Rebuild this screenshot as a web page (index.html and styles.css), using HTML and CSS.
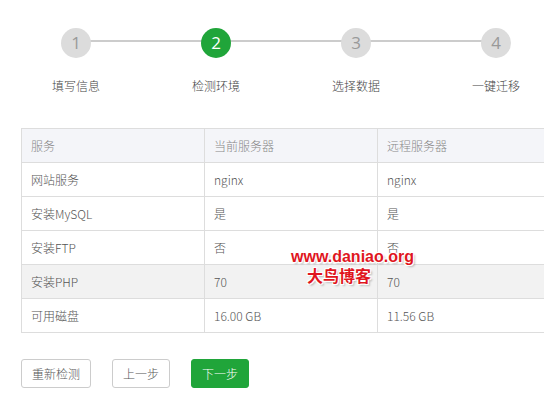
FILE: index.html
```html
<!DOCTYPE html>
<html lang="zh-CN">
<head>
<meta charset="utf-8">
<link rel="stylesheet" href="styles.css">
</head>
<body>
<div class="page">
  <div class="steps">
    <div class="step"><span class="dot">1</span><span class="label">填写信息</span></div>
    <div class="step active"><span class="dot">2</span><span class="label">检测环境</span></div>
    <div class="step"><span class="dot">3</span><span class="label">选择数据</span></div>
    <div class="step"><span class="dot">4</span><span class="label">一键迁移</span></div>
  </div>
  <div class="table-wrap">
    <table class="env">
      <thead>
        <tr><th class="c1">服务</th><th class="c2">当前服务器</th><th class="c3">远程服务器</th></tr>
      </thead>
      <tbody>
        <tr><td>网站服务</td><td>nginx</td><td>nginx</td></tr>
        <tr><td>安装MySQL</td><td>是</td><td>是</td></tr>
        <tr><td>安装FTP</td><td>否</td><td>否</td></tr>
        <tr class="hover"><td>安装PHP</td><td>70</td><td>70</td></tr>
        <tr><td>可用磁盘</td><td>16.00 GB</td><td>11.56 GB</td></tr>
      </tbody>
    </table>
    <div class="wm wm1">www.daniao.org</div>
    <div class="wm wm2">大鸟博客</div>
  </div>
  <div class="actions">
    <button class="btn">重新检测</button>
    <button class="btn">上一步</button>
    <button class="btn primary">下一步</button>
  </div>
</div>
</body>
</html>
```

FILE: styles.css
```css
* { box-sizing: border-box; }
html, body { margin: 0; padding: 0; background: #fff; }
body {
  width: 544px;
  height: 419px;
  overflow: hidden;
  font-family: "Noto Sans CJK SC", "Open Sans", sans-serif;
  font-size: 12px;
  color: #555;
}
.page { padding-top: 28px; }
.steps {
  position: relative;
  display: flex;
  margin-left: 6px;
}
.steps::before {
  content: "";
  position: absolute;
  left: 70px;
  width: 420px;
  top: 12px;
  height: 2px;
  background: #ccc;
}
.step {
  position: relative;
  flex: 0 0 140px;
  width: 140px;
  display: flex;
  flex-direction: column;
  align-items: center;
}
.dot {
  width: 30px;
  height: 30px;
  border-radius: 50%;
  background: #dcdcdc;
  color: #999;
  font-family: "Open Sans", sans-serif;
  font-size: 17px;
  line-height: 30px;
  text-align: center;
}
.step.active .dot { background: #20a53a; color: #fff; }
.label {
  margin-top: 19px;
  line-height: 18px;
  color: #444;
  font-size: 12px;
  font-weight: 300;
}
.table-wrap {
  position: relative;
  margin: 33px 0 0 21px;
  width: 560px;
}
.env {
  border-collapse: collapse;
  width: 560px;
  table-layout: fixed;
}
.env th, .env td {
  border: 1px solid #ddd;
  height: 34px;
  padding: 0 9px;
  text-align: left;
  font-weight: 300;
  white-space: nowrap;
}
.env th { background: #f4f5f9; color: #888; }
.env .c1 { width: 183px; }
.env .c2 { width: 173px; }
.env tr.hover td { background: #f2f2f2; }
.wm {
  position: absolute;
  color: #e0161e;
  font-weight: bold;
  font-size: 16px;
  line-height: 20px;
  text-shadow: 1px 1px 0 #fff, -1px -1px 0 #fff, 1px -1px 0 #fff, -1px 1px 0 #fff, 2px 2px 2px rgba(0,0,0,0.25);
}
.wm1 { left: 270px; top: 119px; font-family: "Liberation Sans", Arial, sans-serif; }
.wm2 { left: 286px; top: 137px; font-family: "Noto Sans CJK SC", sans-serif; }
.actions {
  display: flex;
  gap: 21px;
  margin: 26px 0 0 21px;
}
.btn {
  height: 29px;
  padding: 0 10px;
  border: 1px solid #ccc;
  border-radius: 3px;
  background: #fff;
  color: #555;
  font-family: "Noto Sans CJK SC", sans-serif;
  font-size: 12px;
  font-weight: 300;
}
.btn.primary { background: #20a53a; border-color: #20a53a; color: #fff; }
```
